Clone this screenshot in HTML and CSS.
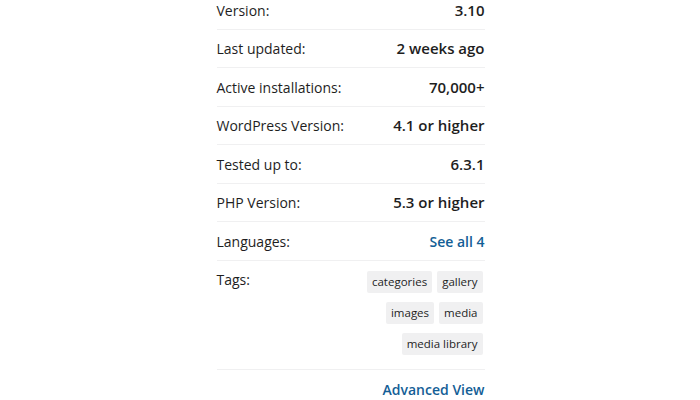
FILE: index.html
```html
<!DOCTYPE html>
<html lang="en">
<head>
    <meta charset="UTF-8">
    <meta name="viewport" content="width=device-width, initial-scale=1.0">
    <title>Plugin Meta</title>
    <link rel="stylesheet" href="styles.css">
</head>
<body>
    <div class="plugin-meta">
        <ul>
            <li><span class="label">Version:</span> <strong>3.10</strong></li>
            <li><span class="label">Last updated:</span> <strong>2 weeks ago</strong></li>
            <li><span class="label">Active installations:</span> <strong>70,000+</strong></li>
            <li><span class="label">WordPress Version:</span> <strong>4.1 or higher</strong></li>
            <li><span class="label">Tested up to:</span> <strong>6.3.1</strong></li>
            <li><span class="label">PHP Version:</span> <strong>5.3 or higher</strong></li>
            <li><span class="label">Languages:</span> <a href="#" class="link">See all 4</a></li>
            <li>
                <span class="label">Tags:</span>
                <div class="tags">
                    <a href="#" class="tag">categories</a>
                    <a href="#" class="tag">gallery</a>
                    <a href="#" class="tag">images</a>
                    <a href="#" class="tag">media</a>
                    <a href="#" class="tag">media library</a>
                </div>
            </li>
        </ul>
        <p class="advanced"><a href="#" class="link">Advanced View</a></p>
    </div>
</body>
</html>
```

FILE: styles.css
```css
body {
    margin: 0;
    background: #fff;
    font-family: "Open Sans", "Liberation Sans", sans-serif;
    font-size: 15px;
    line-height: 22.5px;
    color: #1e1e1e;
}
.plugin-meta {
    width: 268px;
    margin: -9px auto 0;
    padding-left: 1px;
}
.plugin-meta ul {
    list-style: none;
    margin: 0;
    padding: 0;
}
.plugin-meta li {
    display: flex;
    justify-content: space-between;
    align-items: flex-start;
    padding: 7.5px 0;
    border-bottom: 1px solid #f0f0f1;
}
.label,
.plugin-meta li .link {
    font-size: 14px;
    line-height: 21.5px;
    padding-top: 1px;
}
.plugin-meta strong {
    font-weight: 600;
}
.link {
    color: #135e96;
    font-size: 14px;
    font-weight: 600;
    text-decoration: none;
}
.tags {
    display: flex;
    flex-wrap: wrap;
    justify-content: flex-end;
    gap: 9px 5px;
    width: 130px;
    margin: 2.5px 2px 7px 0;
}
.tag {
    display: block;
    background: #f0f0f1;
    color: #1e1e1e;
    font-size: 11.5px;
    line-height: 22px;
    padding: 0 5px;
    border-radius: 2px;
    text-decoration: none;
}
.advanced {
    margin: 0;
    padding: 7.5px 0;
    text-align: right;
}
```
